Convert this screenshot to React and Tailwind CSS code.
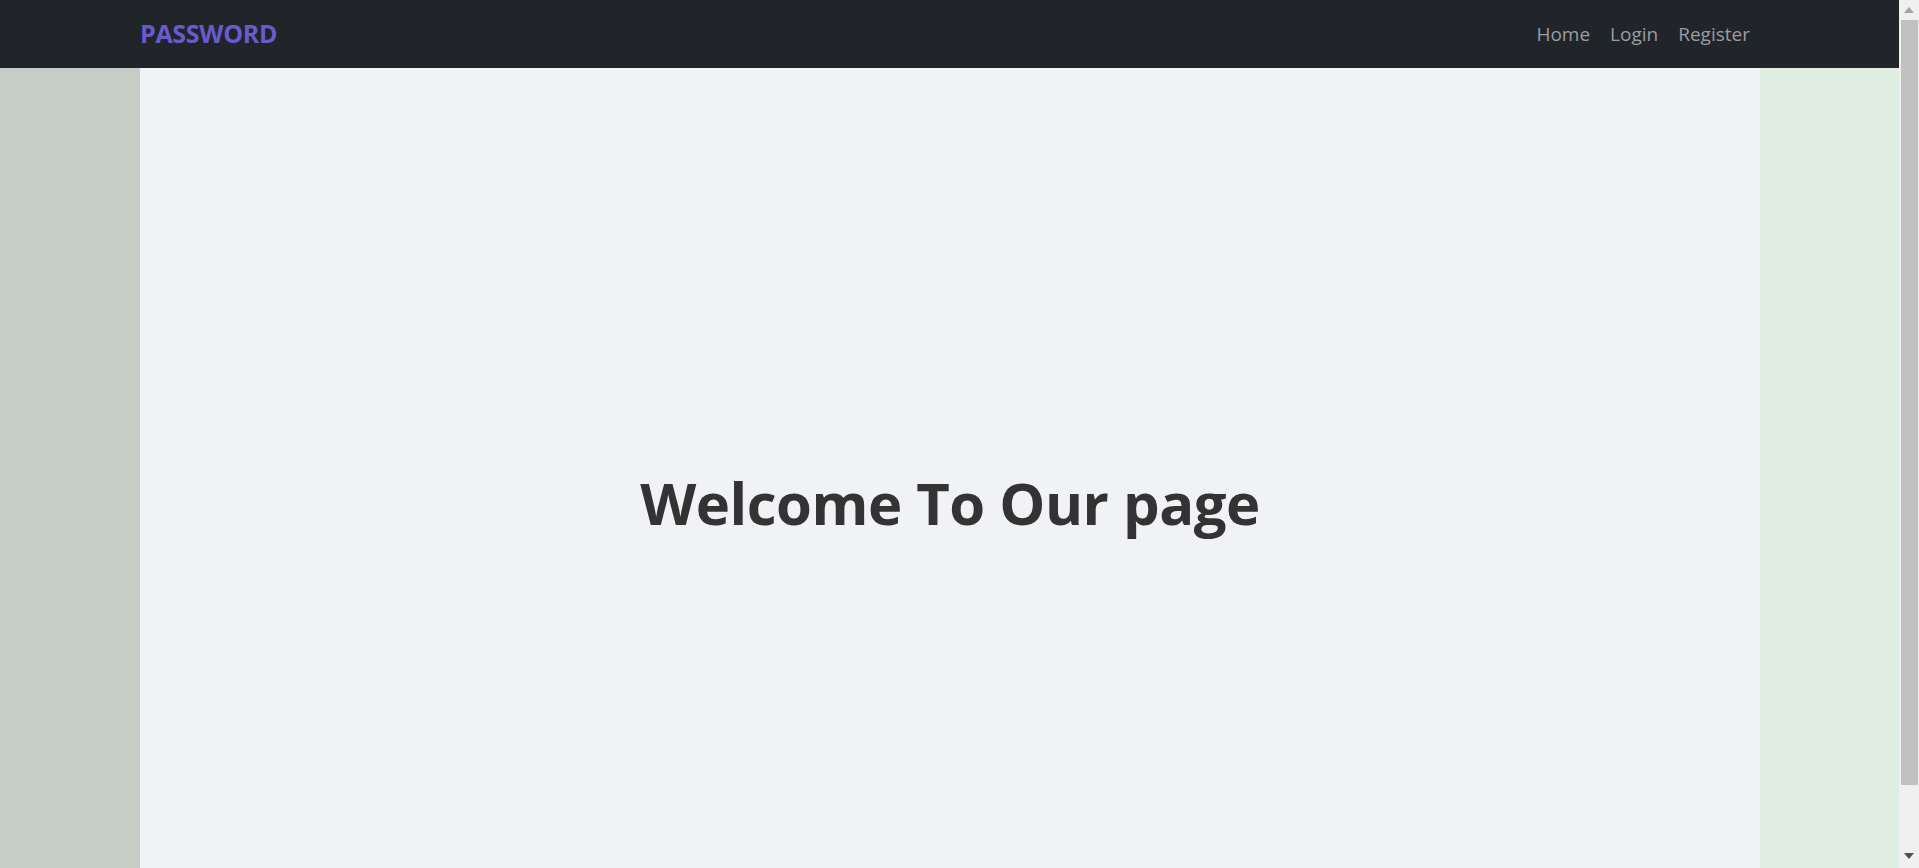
export default function App() {
  const links = ["Home", "Login", "Register"];

  return (
    <div className="h-screen flex overflow-hidden bg-[#f0f2f5]" style={{ fontFamily: "'Open Sans', 'Noto Sans', sans-serif" }}>
      <div className="flex-1 flex flex-col min-w-0">
        {/* Navbar */}
        <nav className="h-[68px] shrink-0 bg-[#212529] grid grid-cols-[140px_1fr_139px]">
          <div className="col-start-2 flex items-center justify-between">
            <a className="text-[25px] font-bold text-[#6a5acd] tracking-[-0.3px] cursor-pointer">PASSWORD</a>
            <ul className="flex items-center">
              {links.map(l => (
                <li key={l}>
                  <a className="block px-[10px] text-[19px] text-[#9a9da1] cursor-pointer">{l}</a>
                </li>
              ))}
            </ul>
          </div>
        </nav>

        {/* Body: full viewport height below the navbar, so it runs past the fold */}
        <div className="h-screen shrink-0 grid grid-cols-[140px_1fr_139px]">
          <aside className="bg-[#c6cdc6]" />
          <main className="flex items-center justify-center">
            <h1 className="text-[58px] font-bold text-[#333333] tracking-[-0.5px]">Welcome To Our page</h1>
          </main>
          <aside className="bg-[#e0ede3]" />
        </div>
      </div>

      {/* Scrollbar */}
      <div className="w-[20px] shrink-0 bg-[#f0f0f0] flex flex-col items-center">
        <div className="h-[20px] w-full flex items-center justify-center">
          <svg width="10" height="6" viewBox="0 0 10 6"><path d="M5 0 L10 6 L0 6 Z" fill="#a3a3a3" /></svg>
        </div>
        <div className="w-[17px] h-[765px] ml-[1px] bg-[#c1c1c1]" />
        <div className="flex-1 w-full flex items-end justify-center pb-[9px]">
          <svg width="10" height="6" viewBox="0 0 10 6"><path d="M0 0 L10 0 L5 6 Z" fill="#505050" /></svg>
        </div>
      </div>
    </div>
  );
}
